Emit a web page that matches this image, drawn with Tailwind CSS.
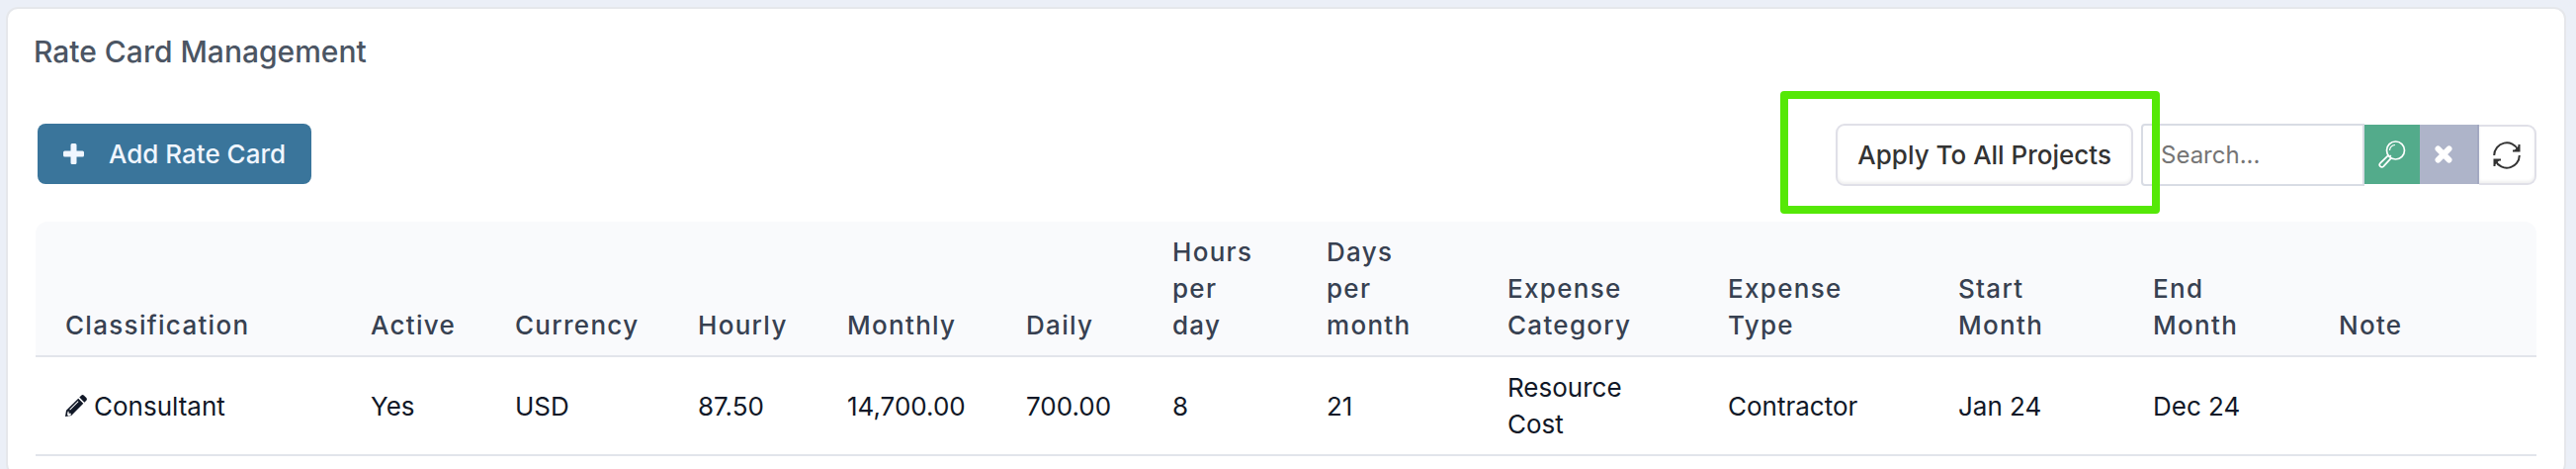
<!DOCTYPE html>
<html lang="en">
<head>
<meta charset="utf-8">
<title>Rate Card Management</title>
<script src="https://cdn.jsdelivr.net/npm/@tailwindcss/browser@4"></script>
</head>
<body class="overflow-hidden bg-[#ebeff7] pt-[7px] pr-[10px] pl-[6px] font-[Inter,sans-serif] text-[26px] leading-[37px] text-[#111827]">
<main class="min-h-screen rounded-[12px] border-2 border-[#e5e7eb] bg-white px-[26px] pt-[23px]">
  <h1 class="text-[30px] leading-[40px] font-medium text-[#4b5563]">Rate Card Management</h1>

  <div class="mt-[53px] flex items-start justify-between pr-[2px] pl-[4px]">
    <button type="button" class="flex h-[61px] items-center gap-[25px] rounded-[8px] bg-[#3a759b] px-[26px] font-medium text-[#f0f6ff]">
      <svg class="size-[21px]" viewBox="0 0 21 21" fill="currentColor" aria-hidden="true"><path d="M9 0h3q1.500 0 1.500 1.500v6h6q1.500 0 1.500 1.500v3q0 1.500-1.500 1.500h-6v6q0 1.500-1.500 1.500H9q-1.500 0-1.500-1.500v-6h-6Q0 13.500 0 12V9q0-1.500 1.500-1.500h6v-6Q7.500 0 9 0z"/></svg>
      Add Rate Card
    </button>

    <div class="flex items-start gap-[8px]">
      <button type="button" class="h-[63px] rounded-[9px] border-2 border-[#e0e0e8] bg-white px-[20px] font-medium text-[#333333] shadow-[inset_0_-2px_3px_#00000010]">Apply To All Projects</button>
      <form class="relative flex items-start">
        <div class="pointer-events-none absolute top-[-33px] right-[381px] h-[124px] w-[384px] rounded-[4px] border-8 border-[#55e807]"></div>
        <input type="text" aria-label="Search" placeholder="Search..." class="h-[63px] w-[226px] rounded-l-[4px] border-2 border-[#d8dce4] bg-white pl-[18px] text-[24px] outline-none placeholder:text-[#757575]">
        <button type="button" aria-label="Search" class="mt-px flex h-[60px] w-[56px] items-center justify-center bg-[#53ab8b] text-white">
          <svg class="size-[28px]" viewBox="0 0 28 28" fill="none" stroke="currentColor" stroke-width="1.700" aria-hidden="true"><circle cx="17.500" cy="10" r="9"/><path d="M11.500 10a6 6 0 0 1 5.500-5.500" stroke-width="1.200"/><path d="M10 15.200l-8 7.600a2.300 2.300 0 0 0 3.300 3.300l7.600-8.200M11.300 16.500l1.500-1.500"/></svg>
        </button>
        <button type="button" aria-label="Clear search" class="mt-px flex h-[60px] w-[60px] items-center border-r-2 border-[#a3a9c2] bg-[#aeb4c9] pl-[15px] text-white">
          <svg class="size-[18px]" viewBox="0 0 18 18" fill="none" stroke="currentColor" stroke-width="5.800" stroke-linecap="round" aria-hidden="true"><path d="M3.400 3.400l11.200 11.200M14.600 3.400L3.400 14.600"/></svg>
        </button>
        <button type="button" aria-label="Refresh" class="mt-px flex h-[61px] w-[58px] items-center justify-center rounded-r-[9px] border-2 border-l-0 border-[#e0e0e8] bg-white text-[#333333] shadow-[inset_0_-2px_3px_#00000010]">
          <svg class="size-[28px]" viewBox="0 0 28 28" fill="none" stroke="currentColor" stroke-width="2" aria-hidden="true"><path d="M1.200 14A12.800 12.800 0 0 1 25.500 8.500M26.800 14A12.800 12.800 0 0 1 2.500 19.500"/><path d="M26.500 3v6.500H20M1.500 25v-6.500H8"/><path d="M26.500 4v5.500H21zM1.500 24v-5.500H7z" fill="currentColor" stroke="none"/></svg>
        </button>
      </form>
    </div>
  </div>

  <div class="mt-[36px] px-[2px]">
  <table class="w-full table-fixed border-separate border-spacing-0 text-left">
    <colgroup>
      <col class="w-[309px]"><col class="w-[146px]"><col class="w-[185px]"><col class="w-[151px]"><col class="w-[181px]"><col class="w-[148px]"><col class="w-[156px]"><col class="w-[183px]"><col class="w-[223px]"><col class="w-[233px]"><col class="w-[197px]"><col class="w-[188px]"><col>
    </colgroup>
    <thead class="align-bottom tracking-wider text-[#374151] [&_th]:border-b-2 [&_th]:border-[#e2e5eb] [&_th]:bg-[#f9fafc] [&_th]:py-[12px] [&_th]:pl-[30px] [&_th]:font-medium">
      <tr>
        <th scope="col" class="rounded-tl-[12px]">Classification</th>
        <th scope="col">Active</th>
        <th scope="col">Currency</th>
        <th scope="col">Hourly</th>
        <th scope="col">Monthly</th>
        <th scope="col">Daily</th>
        <th scope="col">Hours<br>per<br>day</th>
        <th scope="col">Days<br>per<br>month</th>
        <th scope="col">Expense<br>Category</th>
        <th scope="col">Expense<br>Type</th>
        <th scope="col">Start<br>Month</th>
        <th scope="col">End<br>Month</th>
        <th scope="col" class="rounded-tr-[12px]">Note</th>
      </tr>
    </thead>
    <tbody class="[&_td]:border-b-2 [&_td]:border-[#e2e5eb] [&_td]:py-[12px] [&_td]:pl-[30px]">
      <tr>
        <td>
          <div class="flex items-center gap-[7px]">
            <button type="button" aria-label="Edit Consultant">
              <svg class="size-[22px]" viewBox="0 0 22 22" fill="currentColor" aria-hidden="true"><path d="M13.200 3.700l5.100 5.100L6.200 21 0 22l1-6.200zM2.600 16.700l-.6 3.300 1.200 1.200 2.600-.6v-1.800H3.600v-2.100zM12.800 6.300L4.300 14.800l.7.700 8.500-8.500z" fill-rule="evenodd"/><path d="M14.300 2.600L16.200.7q1.400-1.200 2.800 0L21.300 3q1.200 1.400 0 2.800l-1.900 1.900z"/></svg>
            </button>
            Consultant
          </div>
        </td>
        <td>Yes</td>
        <td>USD</td>
        <td>87.50</td>
        <td>14,700.00</td>
        <td>700.00</td>
        <td>8</td>
        <td>21</td>
        <td>Resource<br>Cost</td>
        <td>Contractor</td>
        <td>Jan 24</td>
        <td>Dec 24</td>
        <td></td>
      </tr>
    </tbody>
  </table>
  </div>
</main>
</body>
</html>
